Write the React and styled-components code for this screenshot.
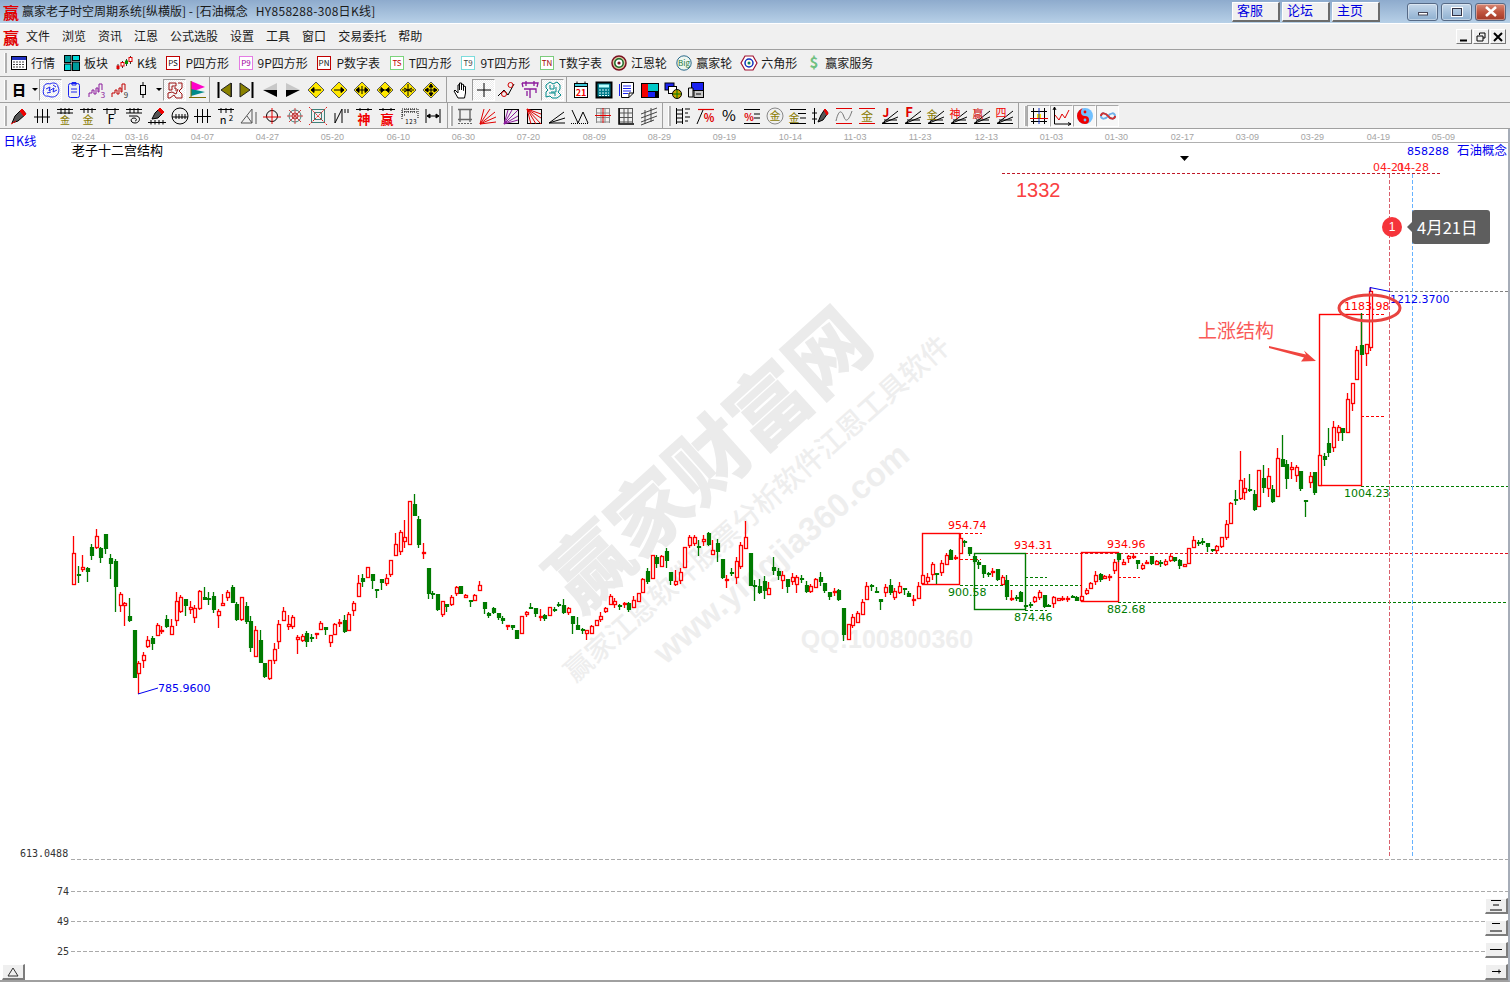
import React from "react"
import styled, { createGlobalStyle } from "styled-components"

const CJK = `"Noto Sans CJK SC", "Liberation Sans", sans-serif`
const RED = "#ff0000"
const GREEN = "#007b00"

const GlobalStyle = createGlobalStyle`
  html, body {
    margin: 0;
    background: #fff;
    font-family: ${CJK};
  }
`

const Page = styled.div`
  width: 1510px;
  height: 982px;
  display: flex;
  flex-direction: column;
  overflow: hidden;
  background: #f0f0f0;
  color: #111;
  font-size: 12px;
`

/* title bar */
const TitleBar = styled.header`
  height: 23px;
  flex: none;
  display: flex;
  align-items: center;
  padding-left: 3px;
  background: linear-gradient(#8eabcd, #b7d0e7);
  border-bottom: 1px solid #fff;
`
const Logo = styled.span`
  width: 16px;
  font-size: 16px;
  line-height: 16px;
  font-weight: 700;
  color: #e00000;
  flex: none;
`
const TitleText = styled.span`
  margin: -2px 0 0 3px;
  white-space: pre;
  color: #1a1a1a;
  flex: 1;
`
const TitleCode = styled.span`
  letter-spacing: 0.3px;
`
const LinkGroup = styled.div`
  display: flex;
  gap: 2px;
  margin-right: 27px;
`
const LinkButton = styled.button`
  width: 48px;
  height: 20px;
  padding: 0 0 3px 4px;
  text-align: left;
  font: 13px/1 ${CJK};
  color: #0000e0;
  background: #f0f0f0;
  border: 1px solid;
  border-color: #fff #6c6c6c #6c6c6c #fff;
  border-right-width: 2px;
  border-bottom-width: 2px;
`
const WinGroup = styled.div`
  display: flex;
  gap: 3px;
  margin-right: 4px;
`
const WinButton = styled.div`
  width: 31px;
  height: 18px;
  box-sizing: border-box;
  display: flex;
  align-items: center;
  justify-content: center;
  border: 1px solid #566a86;
  border-radius: 3px;
  box-shadow: inset 0 0 0 1px #ffffff66;
  background: ${(p) =>
    p.$close
      ? "linear-gradient(#d68a78 0%, #c0553f 50%, #a33a28 100%)"
      : "linear-gradient(#c6d8ea 0%, #a9c3dd 50%, #8fb0d0 100%)"};
`

/* menu */
const MenuBar = styled.nav`
  height: 25px;
  flex: none;
  display: flex;
  align-items: center;
  padding-left: 3px;
  border-bottom: 1px solid #a0a0a0;
`
const MenuItems = styled.div`
  display: flex;
  gap: 12px;
  margin: -2px 0 0 7px;
  flex: 1;
`
const MenuItem = styled.span`
  color: #1a1a1a;
`
const MdiGroup = styled.div`
  display: flex;
  gap: 1px;
  margin-right: 4px;
`
const MdiButton = styled.div`
  width: 16px;
  height: 15px;
  box-sizing: border-box;
  display: flex;
  align-items: center;
  justify-content: center;
  background: #f0f0f0;
  border: 1px solid;
  border-color: #fff #777 #777 #fff;
`

/* tool bars */
const ToolRow = styled.div`
  height: ${(p) => p.$h}px;
  flex: none;
  display: flex;
  align-items: center;
  padding-left: 3px;
  border-bottom: 1px solid #a0a0a0;
`
const Grip = styled.i`
  width: 1px;
  height: 20px;
  flex: none;
  background: #b0b0b0;
  border-left: 1px solid #fff;
  border-right: 1px solid #b0b0b0;
  margin-left: ${(p) => p.$left || 0}px;
  margin-right: ${(p) => p.$right ?? 1}px;
`
const Divider = styled.i`
  width: 1px;
  height: 25px;
  flex: none;
  background: #a0a0a0;
  margin-left: ${(p) => p.$left || 0}px;
  margin-right: ${(p) => p.$right || 0}px;
`
const TextTool = styled.div`
  display: flex;
  align-items: center;
  gap: ${(p) => p.$gap ?? 4}px;
  margin-left: ${(p) => p.$left ?? 9}px;
  white-space: nowrap;
`
const ToolLabel = styled.span`
  margin-top: -2px;
  color: #1a1a1a;
`
const ToolButton = styled.div`
  width: 23px;
  height: 22px;
  box-sizing: border-box;
  flex: none;
  display: flex;
  align-items: center;
  justify-content: center;
  ${(p) =>
    p.$pressed &&
    `
    background: repeating-conic-gradient(#fff 0 25%, #ececec 0 50%) 0 0 / 2px 2px;
    border: 1px solid;
    border-color: #9a9a9a #fff #fff #9a9a9a;
  `}
  ${(p) =>
    p.$framed &&
    `
    background: #f7f7f7;
    border: 1px solid;
    border-color: #a8a8a8 #fff #fff #a8a8a8;
  `}
`
const DropArrow = styled.div`
  width: 9px;
  height: 22px;
  flex: none;
  display: flex;
  align-items: center;
  justify-content: center;
  &::after {
    content: "";
    border: 3px solid transparent;
    border-top: 3px solid #000;
    border-bottom: 0;
  }
`
const GlyphSvg = styled.svg`
  display: block;
  flex: none;
  overflow: visible;
  font-family: ${CJK};
`

const Glyph = ({ size = 20, children }) => (
  <GlyphSvg width={size} height={size} viewBox="0 0 20 20" fill="none" stroke="#000" strokeWidth="1">
    {children}
  </GlyphSvg>
)

const Fanned = ({ children }) => (
  <>
    <path d="M2 17.5H18M2 17.5L18 11M2 17.5L18 5M4 14H17" />
    {children}
  </>
)

const Tx = ({ x = 10, y = 16, s = 14, c = "#000", w = 400, children }) => (
  <text x={x} y={y} fontSize={s} fill={c} stroke="none" fontWeight={w} textAnchor="middle">
    {children}
  </text>
)

const Diamond = ({ children }) => (
  <>
    <path d="M10 2L18 10L10 18L2 10Z" fill="#ffe800" stroke="#555" />
    <g stroke="#000" fill="#000">{children}</g>
  </>
)

const icons = {
  day: <Tx y={15} s={14} w={900}>日</Tx>,
  cloud: (
    <g stroke="#1a22f0">
      <path d="M3 8C2 4 7 3 9 4C12 2 17 3 17 7C19 10 17 14 16 15C13 18 9 17 7 16C3 17 1 13 3 8Z" />
      <path d="M5 9L9 7L8 11L13 8L12 12L16 10M6 13L10 12M12 5L15 7" />
    </g>
  ),
  clip: (
    <g stroke="#1a22f0">
      <rect x="4.5" y="3.5" width="11" height="14" rx="2" />
      <path d="M8 2.5H12V5H8ZM7 9H13M7 12H13" />
    </g>
  ),
  wave3: (
    <>
      <path d="M2 17V13H5V10H7V14H9V8H11V12H12V4H15V10" stroke="#8b1a9c" />
      <Tx x={16} y={18} s={8} c="#8b1a9c">3</Tx>
    </>
  ),
  wave9: (
    <>
      <path d="M2 17V13H5V10H7V14H9V8H11V12H12V4H15V10" stroke="#c00000" />
      <Tx x={16} y={18} s={8} c="#333">9</Tx>
    </>
  ),
  candle: (
    <>
      <path d="M10 2V5M10 15V18" />
      <rect x="7.5" y="5.5" width="5" height="9" />
    </>
  ),
  maze: (
    <path
      stroke="#9a1010"
      d="M4 3H11V6H7V10H4ZM13 3H17V8L14 11L17 14V18H11L9 15L5 18H3V13L7 12L11 14L13 9M9 8H11V11"
    />
  ),
  flag: (
    <>
      <path d="M3 1V12L17 7Z" fill="#ff00c8" stroke="none" />
      <path d="M3 9V16L17 12Z" fill="#008a8a" stroke="none" />
      <path d="M3 1V18M1 17.5H18" stroke="#7a6a00" />
    </>
  ),
  first: (
    <>
      <path d="M17 3V17L7 10Z" fill="#8a8200" stroke="#222" />
      <path d="M4.5 2V18" strokeWidth="2" />
      <path d="M17.5 3V17" stroke="#222" />
    </>
  ),
  last: (
    <>
      <path d="M3 3V17L13 10Z" fill="#8a8200" stroke="#222" />
      <path d="M15.5 2V18" strokeWidth="2" />
    </>
  ),
  prev: (
    <>
      <path d="M17 3V10H3Z" fill="#c8c8c8" stroke="none" />
      <path d="M17 17V10H3Z" fill="#000" stroke="none" />
    </>
  ),
  next: (
    <>
      <path d="M3 3V10H17Z" fill="#c8c8c8" stroke="none" />
      <path d="M3 17V10H17Z" fill="#000" stroke="none" />
    </>
  ),
  dLeft: (
    <Diamond>
      <path d="M5 10H15M5 10L8 7.5V12.5Z" />
    </Diamond>
  ),
  dRight: (
    <Diamond>
      <path d="M5 10H15M15 10L12 7.5V12.5Z" />
    </Diamond>
  ),
  dBoth: (
    <Diamond>
      <path d="M4 10H16M4 10L7 7.5V12.5ZM16 10L13 7.5V12.5ZM10 6V14" />
    </Diamond>
  ),
  dIn: (
    <Diamond>
      <path d="M4 10H16M9 10L6 7.5V12.5ZM11 10L14 7.5V12.5Z" />
    </Diamond>
  ),
  dCross: (
    <Diamond>
      <path d="M4 10H16M10 4V16M6 8L14 12M14 8L6 12" />
    </Diamond>
  ),
  dAll: (
    <Diamond>
      <path d="M4 10H16M10 4V16M10 4L8 7H12ZM10 16L8 13H12ZM4 10L7 8V12ZM16 10L13 8V12Z" />
    </Diamond>
  ),
  hand: (
    <path d="M7 18L3 11L4 10L7 13V5L8.5 4.5V10V3L10.5 3V10V4L12.5 4.5V10.5V6L14.5 6.5V13L13.5 18Z" fill="#fff" />
  ),
  cross: <path d="M10 3V17M3 10H17" />,
  zigzag: (
    <>
      <path d="M1 16L7 10L11 15L17 4" />
      <circle cx="7" cy="14" r="2.5" stroke="#d00000" />
      <circle cx="13.5" cy="5" r="2.5" stroke="#d00000" />
    </>
  ),
  jie: (
    <path
      stroke="#8b1a9c"
      strokeWidth="1.3"
      d="M2 3H18L17 7M2 3L3 7M6 1V6M14 1V6M4 9H16V13M10 9V18M7 11V16"
    />
  ),
  tealMaze: (
    <path
      stroke="#008a8a"
      d="M3 5L7 2L10 4L14 2L17 5V9L15 12L18 15L14 18H9L7 16L3 17V12L5 10L3 8ZM7 5V9H11V5M13 7V12H8M6 13H12V16"
    />
  ),
  cal: (
    <>
      <rect x="3.5" y="4.5" width="13" height="13" fill="#fff" />
      <rect x="3.5" y="3.5" width="13" height="3" fill="#3cc8d8" />
      <path d="M6 1.5V4M14 1.5V4" />
      <Tx y={16} s={9} c="#f00000" w={700}>21</Tx>
    </>
  ),
  calc: (
    <>
      <rect x="2.5" y="2.5" width="15" height="15" fill="#007a8a" stroke="#000" strokeWidth="2" />
      <rect x="5" y="4.5" width="10" height="3" fill="#bff" stroke="none" />
      <path d="M5 10H15M5 13H15M5 15.5H15" stroke="#dff" strokeDasharray="2 1" />
    </>
  ),
  note: (
    <>
      <path d="M4.5 2.5H16.5V13L12 17.5H4.5Z" fill="#fff" />
      <path d="M2.5 4V16M6 6H14M6 8.5H14M6 11H14M6 13.5H11" stroke="#1a22f0" />
      <path d="M12 17.5V13H16.5" />
    </>
  ),
  disk: (
    <>
      <rect x="1" y="3" width="18" height="15" fill="#000" stroke="none" />
      <rect x="2" y="4" width="6" height="13" fill="#f00000" stroke="none" />
      <rect x="8" y="4" width="10" height="7" fill="#00c8c8" stroke="none" />
      <rect x="8" y="12" width="7" height="5" fill="#1a22f0" stroke="none" />
    </>
  ),
  net: (
    <>
      <rect x="2" y="3" width="9" height="7" fill="#1a22f0" />
      <rect x="5.5" y="6.5" width="8" height="7" fill="#fff" />
      <circle cx="14" cy="14" r="4.5" fill="#c8a000" />
      <path d="M10 14H18M14 10V18" stroke="#007a00" />
    </>
  ),
  pc: (
    <>
      <rect x="5.5" y="2.5" width="12" height="8" fill="#1a22f0" />
      <rect x="8" y="10.5" width="9.5" height="7" fill="#c8c8c8" />
      <path d="M2.5 8H7V17H2.5Z" fill="#e8e8e8" />
      <path d="M10 14H15" />
    </>
  ),
  pencil: (
    <>
      <path d="M3 17L6 10L13 3L17 8L9 15Z" fill="#555" />
      <path d="M11 5L13 3L17 8L15 10Z" fill="#f00000" stroke="#f00000" />
      <path d="M2 18L7 15" stroke="#f00000" />
    </>
  ),
  bars: <path d="M5.5 3V17M10.5 3V17M15.5 3V17M2 11H18" />,
  gold1: (
    <>
      <path d="M2 3.5H18M2 7H18M6 2V8M14 2V8M10 2V8" />
      <Tx y={18} s={10} c="#8a7a00">金</Tx>
    </>
  ),
  gold2: (
    <>
      <path d="M2 3.5H18M6 2V7M14 2V7M10 2V7" />
      <Tx y={18} s={11} c="#8a7a00">金</Tx>
    </>
  ),
  fBar: (
    <>
      <path d="M2 3.5H18M6 2V8M14 2V8" />
      <Tx y={18} s={13}>F</Tx>
    </>
  ),
  spiral: <path d="M2 3.5H18M2 7H18M6 2V7M10 2V7M14 2V7M5 10H13C17 11 16 17 11 17C6 17 6 12 10 12C13 12 13 15 11 15" />,
  pencilRule: (
    <>
      <path d="M5 13L8 7L13 2L17 6L11 12Z" fill="#555" />
      <path d="M11 4L13 2L17 6L15 8Z" fill="#f00000" stroke="#f00000" />
      <path d="M1 16.5H19M4 14V18.5M8 14V18.5M12 14V18.5M16 14V18.5" />
    </>
  ),
  circleRule: (
    <>
      <circle cx="10" cy="10" r="8" />
      <path d="M2 11H18M6 8V13M9 8V13M12 8V13M15 8V13" />
    </>
  ),
  bars2: <path d="M4.5 3V17M9.5 3V17M14.5 3V17M1 10.5H18" />,
  n2: (
    <>
      <path d="M2 3.5H18M5 2V7M10 2V7M15 2V7" />
      <Tx x={7} y={18} s={11}>n</Tx>
      <Tx x={15} y={15} s={8}>2</Tx>
    </>
  ),
  tri: <path d="M2 17L13 3V17ZM8 10L13 17M17 6V18" stroke="#555" />,
  crosshair: (
    <>
      <circle cx="10" cy="10" r="5.5" stroke="#000" />
      <path d="M1 11H19M10 2V18" stroke="#e00000" />
    </>
  ),
  web: (
    <>
      <circle cx="10" cy="10" r="3" stroke="#b04040" />
      <circle cx="10" cy="10" r="6" stroke="#40807a" />
      <path d="M2 10H18M10 2V18M4 4L16 16M16 4L4 16" stroke="#d04040" />
    </>
  ),
  webSquare: (
    <>
      <rect x="3.5" y="3.5" width="13" height="13" stroke="#40807a" />
      <rect x="6.5" y="6.5" width="7" height="7" stroke="#40807a" />
      <path d="M1 1L19 19M19 1L1 19" stroke="#e02020" strokeDasharray="2 1" />
    </>
  ),
  nQuote: <path d="M4 17V7M4 17L11 3V17M14 3V7M17 3V7" />,
  shen: (
    <>
      <path d="M2 3.5H18M6 2V5M14 2V5" />
      <Tx y={18} s={13} c="#f00000" w={700}>神</Tx>
    </>
  ),
  ying: (
    <>
      <path d="M2 3.5H18M6 2V5M14 2V5" />
      <Tx y={18} s={13} c="#f00000" w={700}>赢</Tx>
    </>
  ),
  rule123: (
    <>
      <path d="M2 13V3H18V13M2 6H18M5 3V6M8 3V6M11 3V6M14 3V6M2 9H5" strokeDasharray="1 1" />
      <Tx x={7} y={18} s={6}>1</Tx>
      <Tx x={11} y={18} s={6}>2</Tx>
      <Tx x={15} y={18} s={6}>3</Tx>
    </>
  ),
  span: <path d="M3 3V17M17 3V17M4 10H16M4 10L7 8V12ZM16 10L13 8V12Z" fill="#000" />,
  boxRule: (
    <>
      <path d="M3 3.5H17M5 3.5V16M15 3.5V16M3 13.5H17" stroke="#666" strokeWidth="1.4" />
      <path d="M3 17.5H17" stroke="#666" strokeDasharray="2 1" />
    </>
  ),
  redFan: <path stroke="#e00000" d="M2 18L18 16M2 18L18 11M2 18L17 6M2 18L12 3M2 18L6 3" />,
  boxFan: (
    <>
      <rect x="3.5" y="3.5" width="14" height="14" stroke="#000" />
      <path stroke="#8b1a9c" d="M3 18L17 14M3 18L17 10M3 18L17 4M3 18L11 4M3 18L7 4" />
    </>
  ),
  boxFanRed: (
    <>
      <rect x="3.5" y="3.5" width="14" height="14" stroke="#000" />
      <path stroke="#e00000" d="M3 3L17 8M3 3L17 12M3 3L17 18M3 3L12 18M3 3L7 18" />
    </>
  ),
  lineFan: <path d="M2 17H18M2 17L18 12M2 17L17 6" />,
  vDots: (
    <>
      <path d="M2 4L8 17L13 6L18 17" />
      <path d="M1 17.5H19" strokeDasharray="1 1" />
    </>
  ),
  gridRed: (
    <>
      <path stroke="#888" d="M3 2.5H17M3 7H17M3 11.5H17M3 16H17M3.5 2V17M8 2V17M12 2V17M16.5 2V17" />
      <path stroke="#e00000" d="M2 9.5H18M10 2V17" />
    </>
  ),
  gridBlack: (
    <>
      <path stroke="#555" d="M3 2.5H17M3 7H17M3 11.5H17M3 16H17M3.5 2V17M8 2V17M12 2V17M16.5 2V17" />
      <path d="M3 2V18H18" strokeWidth="1.5" />
    </>
  ),
  stripes: <path stroke="#444" d="M2 8L18 2M2 12L18 6M2 16L18 10M2 19L15 14M6 4V18M12 2V16" />,
  ladder: <path d="M3.5 2V18M9.5 2V18M3 4H9M3 8H9M3 12H9M3 16H9M12 3H17M12 7H15M12 11H17M12 15H15" />,
  slashPct: (
    <>
      <path d="M2 3.5H18" stroke="#e00000" strokeWidth="1.2" />
      <path d="M1 18L7 4" />
      <Tx x={13} y={16} s={11} c="#e00000" w={700}>%</Tx>
    </>
  ),
  pct: <Tx y={15} s={15}>%</Tx>,
  pctLines: (
    <>
      <path d="M2 3.5H18M12 8H18M12 12H18M2 17.5H18" />
      <Tx x={7} y={15} s={10} c="#e00000" w={700}>%</Tx>
    </>
  ),
  goldCircle: (
    <>
      <circle cx="10" cy="10" r="8" stroke="#888" />
      <Tx y={14} s={11} c="#8a7a00">金</Tx>
    </>
  ),
  goldLines: (
    <>
      <path d="M2 3.5H18M10 7.5H18M12 12H18M2 17.5H18" />
      <Tx x={6} y={16} s={11} c="#8a7a00">金</Tx>
    </>
  ),
  candlePen: (
    <>
      <path d="M3.5 2V18M1 7H6M1 13H6" />
      <path d="M7 16L10 9L14 3L17 7L12 14Z" fill="#555" />
      <path d="M13 4L14 3L17 7L16 9Z" fill="#f00000" stroke="#f00000" />
    </>
  ),
  waveRed: (
    <>
      <path d="M2 2.5H18M2 17.5H18" stroke="#e00000" />
      <path d="M2 15C5 2 8 5 10 11C12 17 15 14 18 5" stroke="#777" />
    </>
  ),
  goldRed: (
    <>
      <path d="M2 2.5H18M2 17.5H18" stroke="#e00000" />
      <Tx y={15} s={12} c="#8a7a00">金</Tx>
    </>
  ),
  fanJ: (
    <Fanned>
      <Tx x={6} y={11} s={12} c="#e00000" w={700}>J</Tx>
    </Fanned>
  ),
  fanF: (
    <Fanned>
      <Tx x={6} y={11} s={13} c="#e00000" w={700}>F</Tx>
    </Fanned>
  ),
  fanGold: (
    <Fanned>
      <Tx x={6} y={13} s={11} c="#8a7a00">金</Tx>
    </Fanned>
  ),
  fanShen: (
    <Fanned>
      <Tx x={6} y={12} s={11} c="#f00000">神</Tx>
    </Fanned>
  ),
  fanYing: (
    <Fanned>
      <Tx x={6} y={12} s={11} c="#d00000">赢</Tx>
    </Fanned>
  ),
  fanFour: (
    <Fanned>
      <Tx x={6} y={11} s={11} c="#f00000">四</Tx>
    </Fanned>
  ),
  gridYellow: (
    <>
      <rect x="8" y="8" width="4" height="4" fill="#ffe800" stroke="none" />
      <path d="M2 5.5H18M2 15.5H18M4.5 2V18M15.5 2V18" />
      <path d="M1 12.5H19" stroke="#e00000" />
      <path d="M10 2V18" stroke="#1030c0" />
    </>
  ),
  chartArrow: (
    <>
      <path d="M2.5 1V18H19M2.5 1L1 4M2.5 1L4 4M19 18L16 16.5M19 18L16 19.5" />
      <path d="M3 9L7 14L10 8L13 12L17 4" stroke="#e00000" />
    </>
  ),
  yinyang: (
    <>
      <circle cx="10" cy="10" r="8" fill="#70c0ff" stroke="none" />
      <path d="M10 2A8 8 0 0 0 10 18A4 4 0 0 0 10 10A4 4 0 0 1 10 2Z" fill="#f00000" stroke="none" />
      <circle cx="10" cy="6" r="1.4" fill="#f00000" stroke="none" />
      <circle cx="10" cy="14" r="1.4" fill="#70c0ff" stroke="none" />
    </>
  ),
  infinity: (
    <>
      <path strokeWidth="2" stroke="#70b0e8" d="M10 10C8 7 3 6 3 10C3 14 8 13 10 10" />
      <path strokeWidth="2" stroke="#70b0e8" d="M10 10C12 7 17 6 17 10C17 14 12 13 10 10" />
      <path strokeWidth="2" stroke="#d03030" d="M3 10C3 6 8 7 10 10C12 13 17 14 17 10" />
    </>
  ),
}

const BoxLabel = ({ border, color, dashed, children }) => (
  <GlyphSvg width="14" height="14" viewBox="0 0 14 14">
    <rect
      x="0.5"
      y="0.5"
      width="13"
      height="13"
      fill="#fff"
      stroke={border}
      strokeDasharray={dashed ? "1 1" : undefined}
    />
    <text x="7" y="10" fontSize="8" textAnchor="middle" fill={color}>
      {children}
    </text>
  </GlyphSvg>
)

const topTools = [
  { label: "P四方形", box: "PS", border: "#c00000", color: "#111" },
  { label: "9P四方形", box: "P9", border: "#d000d0", color: "#a000a0", dashed: true },
  { label: "P数字表", box: "PN", border: "#c00000", color: "#111" },
  { label: "T四方形", box: "TS", border: "#00b000", color: "#c00000", dashed: true },
  { label: "9T四方形", box: "T9", border: "#00c0c0", color: "#444", dashed: true },
  { label: "T数字表", box: "TN", border: "#00a000", color: "#a00000", dashed: true },
]

const Tool = ({ name, pressed, framed }) => (
  <ToolButton $pressed={pressed} $framed={framed}>
    <Glyph>{icons[name]}</Glyph>
  </ToolButton>
)

const Tools = ({ names, framed }) =>
  names.map((name) => <Tool key={name} name={name} framed={framed} />)

/* [x, red?, wick top, body top, body bottom, wick bottom], read in 3x crop coordinates */
const segA = [
  [39,1,138,190,282,285],[54,0,228,252,254,278],[66,1,195,232,236,246],[81,0,232,234,245,276],[95,0,162,171,197,210],
  [108,1,117,139,170,176],[122,0,172,174,204,219],[137,0,132,132,176,192],[150,0,193,204,221,267],[165,0,208,213,290,366],
  [180,1,307,313,346,366],[192,1,335,340,346,408],[207,0,324,378,393,396],[222,0,420,420,564,564],[234,1,514,520,548,612],
  [249,1,486,496,509,534],[263,1,438,451,467,474],[276,0,438,444,461,480],[291,1,400,406,434,436],[305,1,407,420,423,432],
  [318,0,376,387,411,414],[333,1,388,409,431,436],[348,1,306,334,389,408],[360,1,315,320,362,370],[375,0,327,327,348,378],
  [390,1,333,351,356,372],[402,1,345,354,380,399],[417,1,300,304,353,360],[432,0,291,321,330,330],[444,0,306,323,326,345],
  [459,0,306,318,360,369],[474,1,357,363,374,414],[486,1,312,339,345,348],[501,1,300,306,320,333],[516,0,285,291,339,339],
  [528,0,336,342,390,393],[543,1,321,322,387,393],[558,0,336,348,396,402],[570,0,378,393,474,486],[585,1,408,420,497,498],
  [600,0,420,450,519,519],[612,0,519,519,561,564],[627,1,510,511,564,570],[642,1,459,478,510,522],[654,1,390,402,453,477],
  [669,1,351,363,390,393],[684,1,375,403,407,420],[696,1,376,381,408,418],[711,1,435,441,446,492],[726,1,432,438,451,456],
  [738,0,423,429,456,471],[753,0,432,441,444,456],[768,1,429,430,433,447],[780,1,393,399,417,420],[795,0,411,411,420,435],
  [810,1,435,435,456,471],[822,1,400,402,432,435],[837,1,387,396,399,411],[852,0,375,390,426,429],[864,1,366,372,420,420],
  [879,1,333,339,360,378],[894,1,255,279,318,321],[906,0,252,264,276,291],[921,1,231,232,261,261],[936,0,252,252,273,297],
  [948,0,297,298,301,324],[963,0,267,267,279,300],[978,1,252,264,279,288],[990,1,210,210,252,261],[1005,1,129,162,195,195],
  [1020,1,120,126,183,195],[1032,1,90,141,152,174],[1047,1,34,34,161,161],[1062,0,12,42,78,78],[1074,0,78,87,165,174],
  [1089,1,159,186,188,207],[1104,0,234,234,312,327],[1116,0,303,309,315,327],[1131,0,312,312,360,363],[1146,1,333,333,372,381],
  [1158,0,342,342,351,366],[1173,1,315,321,342,348],[1188,1,288,291,309,318],[1200,0,288,288,312,312],
]
const segB = [
  [75,1,313,316,320,324],[90,0,330,331,333,351],[102,1,311,315,330,333],[117,1,273,285,300,303],[132,0,337,337,357,372],
  [144,0,366,369,378,384],[159,0,351,354,369,372],[174,0,369,369,384,390],[186,0,378,384,394,402],[201,1,405,405,408,420],
  [216,0,405,405,414,420],[228,0,420,420,447,447],[243,1,378,378,429,429],[258,1,363,366,372,381],[270,0,339,351,354,354],
  [285,0,354,354,372,381],[300,1,357,378,381,393],[312,0,372,375,387,393],[327,1,351,351,375,375],[342,0,351,357,363,366],
  [354,0,336,342,345,351],[369,0,327,345,369,372],[384,1,351,354,366,375],[396,0,378,378,402,432],[411,0,381,405,420,421],
  [426,0,414,417,421,432],[438,1,420,421,429,450],[453,1,405,408,429,429],[468,1,390,390,405,408],[480,1,366,378,387,396],
  [495,1,351,354,363,369],[510,1,312,318,342,345],[522,1,324,333,342,354],[537,0,342,345,348,360],[552,1,336,339,343,354],
  [564,0,336,339,360,366],[579,1,318,330,351,351],[594,1,309,309,333,336],[606,1,264,267,306,309],[621,0,234,243,276,282],
  [636,1,196,196,264,264],[648,0,195,201,222,234],[663,1,195,198,228,231],[678,0,174,183,213,234],[690,0,246,246,273,285],
  [705,1,240,273,282,288],[720,1,234,246,270,282],[732,1,171,171,231,231],[747,1,135,141,165,174],[762,1,135,141,159,168],
  [774,0,150,168,171,198],[789,1,135,147,153,168],[804,0,126,129,165,168],[816,1,150,180,192,195],[831,0,147,159,186,216],
  [846,0,207,207,264,267],[858,1,255,267,270,294],[873,0,234,246,252,258],[888,1,201,213,261,282],[900,1,156,165,228,237],
  [915,1,93,141,174,174],[930,0,189,189,288,288],[942,0,270,285,291,333],[957,0,267,288,309,312],[972,0,258,273,303,327],
  [984,1,276,294,312,315],[999,0,201,231,243,255],[1014,0,234,243,258,270],[1026,1,243,255,270,297],[1041,0,267,267,291,309],
  [1056,1,249,262,273,285],[1068,1,255,261,282,309],[1083,0,255,264,267,279],[1098,0,273,285,306,309],[1110,1,282,288,303,309],
  [1125,1,264,267,291,294],[1140,0,246,261,276,288],[1152,0,279,279,303,309],[1167,0,306,306,321,330],[1182,1,294,303,306,318],
  [1194,0,297,300,330,333],[1209,0,354,354,435,453],[1224,1,402,402,447,447],[1236,1,372,381,405,414],[1251,1,363,369,396,399],
  [1266,1,327,336,372,375],[1278,1,276,288,327,327],[1293,0,282,285,288,303],[1308,0,291,303,306,306],[1320,0,327,327,336,360],
  [1335,1,282,291,306,321],[1350,0,267,285,309,315],[1362,1,294,303,321,330],[1377,1,276,288,306,312],[1392,0,294,294,298,315],
  [1404,0,303,309,321,321],[1419,1,315,327,329,348],[1434,1,276,288,324,327],
]
const segC = [
  [66,1,195,196,218,222],[81,1,190,202,212,222],[96,1,155,163,193,210],[108,0,188,190,192,222],[123,1,150,160,186,198],
  [138,1,130,135,163,165],[150,0,118,120,150,150],[165,1,135,140,142,150],[180,1,70,85,130,133],[192,0,90,93,96,110],
  [207,0,110,112,133,138],[222,0,138,138,156,162],[234,0,150,156,166,177],[249,0,165,165,192,204],[264,0,185,188,195,201],
  [276,1,173,183,186,202],[291,0,177,177,210,213],[306,1,195,201,222,225],[318,0,195,210,260,270],[333,1,240,264,267,273],
  [348,0,255,262,265,273],[360,0,243,246,276,276],[375,0,285,285,288,296],[390,0,276,282,285,294],[402,1,258,262,273,279],
  [417,1,240,245,262,270],[432,0,255,255,291,294],[444,0,282,285,288,291],[459,1,258,262,278,294],[474,1,263,265,269,273],
  [486,1,258,264,268,274],[501,1,258,265,268,275],[516,0,255,258,261,264],[528,0,258,261,273,273],[543,1,258,259,270,271],
  [558,1,235,240,250,255],[570,1,215,220,233,237],[585,1,182,196,212,225],[600,0,190,193,210,216],[612,1,195,199,203,207],
  [627,1,192,197,201,213],[642,1,148,155,179,192],[654,0,130,130,150,157],[669,1,148,155,162,166],[684,1,135,138,145,160],
  [699,1,130,138,142,147],[711,0,150,150,162,177],[726,1,160,165,174,180],[738,1,150,155,159,163],[753,0,138,138,162,165],
  [768,1,150,153,161,165],[780,0,150,157,159,172],[795,1,148,154,161,168],[810,1,132,138,150,156],[822,0,140,142,153,156],
  [837,0,148,150,168,177],[852,1,162,163,167,167],[864,1,114,114,159,159],[879,1,78,90,110,114],[894,0,90,96,102,108],
  [906,0,84,93,99,105],[921,0,99,99,112,126],[936,0,117,117,123,126],[948,1,105,108,120,130],[963,1,80,82,108,114],
  [978,1,30,42,80,90],
]
const segD = [
  [150,1,695,700,758,762],[165,0,660,688,690,705],[180,1,543,631,683,690],[192,1,625,653,667,690],[207,0,612,656,660,666],
  [222,0,660,672,720,723],[234,1,601,601,707,707],[249,0,585,625,653,670],[264,1,594,619,653,681],[276,0,645,657,695,699],
  [291,1,535,565,677,677],[306,0,495,567,590,592],[318,0,570,581,627,657],[333,1,576,590,598,627],[348,1,585,592,616,637],
  [360,0,603,603,657,663],[375,0,690,690,694,741],[390,1,606,619,637,654],[402,0,606,606,669,675],[417,1,555,556,646,646],
  [432,0,548,558,570,588],[444,0,474,519,549,561],[459,1,452,472,530,546],[474,1,465,472,487,514],[486,0,475,474,488,513],
  [501,1,369,388,485,485],[516,1,340,340,400,423],[528,1,229,241,328,328],[543,0,130,225,255,255],[558,1,223,223,250,288],
  [570,1,50,64,232,243],
]

const place = (ox, oy, rows) =>
  rows.map(([zx, red, wt, bt, bb, wb]) => ({
    x: Math.floor(ox + zx / 3),
    red,
    wt: Math.round(oy + wt / 3),
    bt: Math.round(oy + bt / 3),
    bb: Math.round(oy + bb / 3),
    wb: Math.round(oy + wb / 3),
  }))

const candles = [
  ...place(60, 490, segA),
  ...place(440, 490, segB),
  ...place(900, 510, segC),
  ...place(1180, 270, segD),
]

const dates = [
  [71.7, "02-24"], [125, "03-16"], [190.7, "04-07"], [255.7, "04-27"], [320.7, "05-20"], [386.7, "06-10"],
  [451.7, "06-30"], [516.7, "07-20"], [582.7, "08-09"], [647.7, "08-29"], [712.7, "09-19"], [778.7, "10-14"],
  [843.7, "11-03"], [908.7, "11-23"], [974.7, "12-13"], [1039.7, "01-03"], [1104.7, "01-30"], [1170.7, "02-17"],
  [1235.7, "03-09"], [1300.7, "03-29"], [1366.7, "04-19"], [1431.7, "05-09"],
]

const boxes = [
  [922.5, 533.5, 37, 51, RED],
  [974.5, 553.5, 51, 56, GREEN],
  [1081.5, 552.5, 37, 49, RED],
  [1319.5, 314.5, 42, 171, RED],
]

/* [x1, x2, y, colour] */
const levels = [
  [960, 982, 533.5, RED],
  [960, 981, 559.5, RED],
  [960, 1081, 585.5, GREEN],
  [1025, 1508, 553.5, "#e01020"],
  [1025, 1047, 577.5, GREEN],
  [1025, 1047, 610.5, GREEN],
  [1118, 1140, 577.5, RED],
  [1118, 1508, 602.5, GREEN],
  [1361, 1384, 314.5, RED],
  [1361, 1384, 416.5, RED],
  [1361, 1508, 486.5, GREEN],
  [1390, 1508, 291.5, "#808080"],
  [1002, 1441, 173.5, "#c01828"],
]

const values = [
  [948, 529, "954.74", RED],
  [1014, 549, "934.31", RED],
  [948, 596, "900.58", GREEN],
  [1014, 621, "874.46", GREEN],
  [1107, 548, "934.96", RED],
  [1107, 613, "882.68", GREEN],
  [1344, 310, "1183.98", RED],
  [1344, 497, "1004.23", GREEN],
  [158, 692, "785.9600", "#0000f0"],
  [1390, 303, "1212.3700", "#0000f0"],
]

const scale = [
  [859.5, 857, "613.0488", 20],
  [891.5, 895, "74", 57],
  [921.5, 925, "49", 57],
  [951.5, 955, "25", 57],
]

/* chart */
const ChartArea = styled.main`
  position: relative;
  flex: 1;
  background: #fff;
  border-right: 2px solid #a6adb8;
  border-bottom: 2px solid #a0a0a0;
  overflow: hidden;
`
const ChartSvg = styled.svg`
  display: block;
`
const Value = styled.text`
  font: 11px "DejaVu Sans", sans-serif;
  fill: ${(p) => p.$c};
`
const DateText = styled.text`
  font: 9px "Liberation Sans", sans-serif;
  letter-spacing: 0.1px;
  fill: #a4a4a4;
`
const ScaleText = styled.text`
  font: 10px "DejaVu Sans Mono", monospace;
  fill: #333;
`
const ChartTitle = styled.text`
  font: ${(p) => p.$s || 13}px ${CJK};
  fill: ${(p) => p.$c || "#000"};
`
const Watermark = styled.text`
  font-family: ${(p) => p.$latin ? `"Liberation Sans", sans-serif` : CJK};
  font-weight: ${(p) => p.$w || 700};
  font-size: ${(p) => p.$s}px;
  fill: ${(p) => p.$c || "#ebebeb"};
  stroke: ${(p) => p.$c || "#ebebeb"};
  stroke-width: ${(p) => p.$bold || 0}px;
  text-anchor: middle;
  dominant-baseline: central;
`
const MarkerBadge = styled.div`
  position: absolute;
  left: 1382px;
  top: 88px;
  width: 20px;
  height: 20px;
  border-radius: 50%;
  background: #f5343a;
  color: #fff;
  font: 12px/20px "Liberation Sans", sans-serif;
  text-align: center;
`
const Tooltip = styled.div`
  position: absolute;
  left: 1412px;
  top: 81px;
  width: 78px;
  height: 34px;
  box-sizing: border-box;
  padding-left: 5px;
  border-radius: 3px;
  background: #5e5e5e;
  color: #fff;
  font: 16.5px/34px ${CJK};
  &::before {
    content: "";
    position: absolute;
    left: -5px;
    top: 12px;
    border: 5px solid transparent;
    border-left: 0;
    border-right-color: #5e5e5e;
  }
`
const SideButtons = styled.div`
  position: absolute;
  right: 0;
  bottom: 0;
  display: flex;
  flex-direction: column;
  gap: 6px;
`
const BevelButton = styled.div`
  width: 23px;
  height: 16px;
  box-sizing: border-box;
  display: flex;
  align-items: center;
  justify-content: center;
  background: #efefef;
  border: 1px solid;
  border-color: #fff #7c7c7c #7c7c7c #fff;
  border-right-width: 2px;
  border-bottom-width: 2px;
`
const CornerButton = styled(BevelButton)`
  position: absolute;
  left: 2px;
  bottom: 0;
`

const Candle = ({ x, red, wt, bt, bb, wb }) => {
  const color = red ? RED : GREEN
  const h = Math.max(bb - bt, 1)
  return (
    <g>
      <rect x={x - 0.15} y={wt} width="1.3" height={Math.max(wb - wt, 1)} fill={color} />
      {red ? (
        <rect x={x - 0.5} y={bt + 0.5} width="3" height={h} fill="#fff" stroke={color} strokeWidth="1.3" />
      ) : (
        <rect x={x - 1.1} y={bt} width="4.2" height={Math.max(h, 2)} fill={color} />
      )}
    </g>
  )
}

const Chart = () => (
  <ChartSvg width="1508" height="851" viewBox="0 129 1508 851" fill="none">
    <g transform="rotate(-42 705 455)">
      <Watermark x="705" y="455" $s={80} $bold={1.5}>赢家财富网</Watermark>
    </g>
    <g transform="rotate(-41.6 755.5 507)">
      <Watermark x="755.5" y="507" $s={28} $w={500} $c="#eeeeee">赢家江恩软件股票分析软件江恩工具软件</Watermark>
    </g>
    <g transform="rotate(-40 781 553)">
      <Watermark x="781" y="553" $s={33} $c="#eeeeee" $latin>www.yingjia360.com</Watermark>
    </g>
    <Watermark x="887" y="639" $s={25} $c="#eeeeee" $latin>QQ:100800360</Watermark>

    <ChartTitle x="3.5" y="146" $s={12.5} $c="#0000f0">日K线</ChartTitle>
    <path d="M71 142.5H1508" stroke="#b0b0b0" />
    {dates.map(([x, t]) => (
      <DateText key={t} x={x} y={139.5}>{t}</DateText>
    ))}
    <ChartTitle x="72" y="155" $s={13}>老子十二宫结构</ChartTitle>
    <Value x="1407" y="155" $c="#0000f0">858288</Value>
    <ChartTitle x="1457" y="155" $s={12.5} $c="#0000f0">石油概念</ChartTitle>
    <path d="M1180 156H1189L1184.5 161Z" fill="#000" />
    <Value x="1373" y="171" $c="#ff2020">04-21</Value>
    <Value x="1397" y="171" $c="#ff2020">04-28</Value>
    <ChartTitle x="1016" y="197" $s={20} $c="#f94040" style={{ fontFamily: "Liberation Sans" }}>1332</ChartTitle>

    <g shapeRendering="crispEdges">
      {levels.map(([a, b, y, c]) => (
        <path key={`${a}-${y}`} d={`M${a} ${y}H${b}`} stroke={c} strokeDasharray="3 2" />
      ))}
      <path d="M1389.5 174V857" stroke="#d8606c" strokeDasharray="4 2" />
      <path d="M1412.5 174V857" stroke="#66b2ff" strokeDasharray="4 2" />
      {scale.map(([y]) => (
        <path key={y} d={`M71 ${y}H1508`} stroke="#aaaaaa" strokeDasharray="4 2" />
      ))}
    </g>
    {boxes.map(([x, y, w, h, c]) => (
      <rect key={x} x={x} y={y} width={w} height={h} stroke={c} strokeWidth="1.4" />
    ))}
    {candles.map((c) => (
      <Candle key={`${c.x}-${c.wt}`} {...c} />
    ))}

    <path d="M138 694L158 688" stroke="#0000f0" />
    <path d="M1370 292V287.5L1390 291.5" stroke="#0000f0" />

    {values.map(([x, y, t, c]) => (
      <Value key={t} x={x} y={y} $c={c}>{t}</Value>
    ))}
    {scale.map(([y, base, t, x]) => (
      <ScaleText key={t} x={x} y={base}>{t}</ScaleText>
    ))}

    <ellipse cx="1369.5" cy="308" rx="30.5" ry="13" stroke="#e8433f" strokeWidth="3" />
    <ChartTitle x="1198" y="338" $s={19} $c="#f95a58">上涨结构</ChartTitle>
    <path d="M1269 346L1306 354.5L1304 350.5L1316 361L1301 361.5L1304 357.5L1269 348Z" fill="#f0453f" />
  </ChartSvg>
)

const lineSet = (d) => (
  <GlyphSvg width="18" height="13" viewBox="0 0 18 13">
    <path d={d} stroke="#000" strokeWidth="1" />
  </GlyphSvg>
)

export default function App() {
  return (
    <Page>
      <GlobalStyle />
      <TitleBar>
        <Logo>赢</Logo>
        <TitleText>
          赢家老子时空周期系统[纵横版] - [石油概念   <TitleCode>HY858288-308日K线]</TitleCode>
        </TitleText>
        <LinkGroup>
          <LinkButton>客服</LinkButton>
          <LinkButton>论坛</LinkButton>
          <LinkButton>主页</LinkButton>
        </LinkGroup>
        <WinGroup>
          <WinButton>
            <GlyphSvg width="12" height="10" viewBox="0 0 12 10">
              <rect x="1.5" y="5.5" width="9" height="2.5" fill="#fff" stroke="#445" />
            </GlyphSvg>
          </WinButton>
          <WinButton>
            <GlyphSvg width="12" height="10" viewBox="0 0 12 10">
              <rect x="1.5" y="1.5" width="9" height="7" fill="none" stroke="#334" strokeWidth="1" />
              <rect x="0.5" y="0.5" width="11" height="9" fill="none" stroke="#fff" strokeWidth="1" />
            </GlyphSvg>
          </WinButton>
          <WinButton $close>
            <GlyphSvg width="14" height="11" viewBox="0 0 14 11">
              <path d="M2 1L12 10M12 1L2 10" stroke="#fff" strokeWidth="2.6" />
            </GlyphSvg>
          </WinButton>
        </WinGroup>
      </TitleBar>

      <MenuBar>
        <Logo>赢</Logo>
        <MenuItems>
          {["文件", "浏览", "资讯", "江恩", "公式选股", "设置", "工具", "窗口", "交易委托", "帮助"].map((m) => (
            <MenuItem key={m}>{m}</MenuItem>
          ))}
        </MenuItems>
        <MdiGroup>
          <MdiButton>
            <GlyphSvg width="10" height="10" viewBox="0 0 10 10"><path d="M1 8.5H8" stroke="#000" strokeWidth="2" /></GlyphSvg>
          </MdiButton>
          <MdiButton>
            <GlyphSvg width="10" height="10" viewBox="0 0 10 10">
              <path d="M3.5 3V1H9V6H7M1 4H7V9H1Z" fill="none" stroke="#000" />
            </GlyphSvg>
          </MdiButton>
          <MdiButton>
            <GlyphSvg width="10" height="10" viewBox="0 0 10 10"><path d="M1 1L9 9M9 1L1 9" stroke="#000" strokeWidth="2" /></GlyphSvg>
          </MdiButton>
        </MdiGroup>
      </MenuBar>

      <ToolRow $h={26}>
        <Grip $left={1} $right={3} />
        <TextTool $left={1}>
          <GlyphSvg width="16" height="16" viewBox="0 0 16 16">
            <rect x="0.5" y="1.5" width="15" height="13" fill="#fff" stroke="#000" />
            <rect x="1" y="2" width="14" height="3" fill="#2030c0" />
            <path d="M2 7H14M2 9.5H14M2 12H14" stroke="#444" strokeDasharray="2 1" />
          </GlyphSvg>
          <ToolLabel>行情</ToolLabel>
        </TextTool>
        <TextTool>
          <GlyphSvg width="16" height="16" viewBox="0 0 16 16">
            <rect x="0.5" y="0.5" width="6.5" height="7" fill="#009a9a" stroke="#000" />
            <rect x="8.5" y="0.5" width="7" height="5" fill="#00d8d8" stroke="#000" />
            <rect x="0.5" y="9" width="6.5" height="6.5" fill="#00d8d8" stroke="#000" />
            <rect x="8.5" y="7" width="7" height="8.5" fill="#009a9a" stroke="#000" />
          </GlyphSvg>
          <ToolLabel>板块</ToolLabel>
        </TextTool>
        <TextTool $gap={5} $left={8}>
          <GlyphSvg width="16" height="16" viewBox="0 0 16 16">
            <path d="M2 9V15M6.5 6V13M10.5 4V11M14.5 1V9" stroke="#333" />
            <rect x="0.5" y="10.5" width="3" height="3.5" fill="#e00000" />
            <rect x="5" y="7.5" width="3" height="3.5" fill="#fff" stroke="#e00000" />
            <rect x="9" y="5.5" width="3" height="3.5" fill="#009000" />
            <rect x="13" y="2.5" width="3" height="4" fill="#fff" stroke="#e00000" />
          </GlyphSvg>
          <ToolLabel>K线</ToolLabel>
        </TextTool>
        {topTools.map((t) => (
          <TextTool key={t.label} $gap={5} $left={9.6}>
            <BoxLabel border={t.border} color={t.color} dashed={t.dashed}>{t.box}</BoxLabel>
            <ToolLabel>{t.label}</ToolLabel>
          </TextTool>
        ))}
        <TextTool $left={9}>
          <GlyphSvg width="16" height="16" viewBox="0 0 16 16">
            <circle cx="8" cy="8" r="7" fill="#d8c8a0" stroke="#7a1020" strokeWidth="1.5" />
            <circle cx="8" cy="8" r="4.2" fill="#fff" stroke="#1a6a2a" strokeWidth="1.5" />
            <circle cx="8" cy="8" r="1.6" fill="#7a1020" />
          </GlyphSvg>
          <ToolLabel>江恩轮</ToolLabel>
        </TextTool>
        <TextTool $left={9}>
          <GlyphSvg width="16" height="16" viewBox="0 0 16 16">
            <circle cx="8" cy="8" r="7.2" fill="#eef6f0" stroke="#2a6a8a" />
            <text x="8" y="11" fontSize="8" textAnchor="middle" fill="#1a7a3a">Big</text>
          </GlyphSvg>
          <ToolLabel>赢家轮</ToolLabel>
        </TextTool>
        <TextTool $left={9}>
          <GlyphSvg width="16" height="16" viewBox="0 0 16 16">
            <path d="M4 1H12L16 8L12 15H4L0 8Z" fill="#fff" stroke="#a01030" strokeWidth="1.2" />
            <circle cx="8" cy="8" r="4" fill="#ffe" stroke="#1030c0" strokeWidth="1.5" />
            <circle cx="8" cy="8" r="1.5" fill="#108060" />
          </GlyphSvg>
          <ToolLabel>六角形</ToolLabel>
        </TextTool>
        <TextTool $gap={5} $left={11}>
          <GlyphSvg width="12" height="16" viewBox="0 0 12 16">
            <text x="6" y="13" fontSize="15" fontWeight="700" textAnchor="middle" fill="#6fc080">$</text>
          </GlyphSvg>
          <ToolLabel>赢家服务</ToolLabel>
        </TextTool>
      </ToolRow>

      <ToolRow $h={25}>
        <Grip $left={1} $right={0} />
        <Tool name="day" />
        <DropArrow />
        <Tool name="cloud" pressed />
        <Tools names={["clip", "wave3", "wave9", "candle"]} />
        <DropArrow />
        <Tool name="maze" pressed />
        <Tool name="flag" />
        <Divider $right={2} />
        <Tools names={["first", "last", "prev", "next", "dLeft", "dRight", "dBoth", "dIn", "dCross", "dAll"]} />
        <Divider $left={4} $right={2} />
        <Tool name="hand" />
        <Tool name="cross" pressed />
        <Tools names={["zigzag", "jie"]} />
        <Tool name="tealMaze" pressed />
        <Divider $left={2} $right={2} />
        <Tools names={["cal", "calc", "note", "disk", "net", "pc"]} />
      </ToolRow>

      <ToolRow $h={25}>
        <Grip $left={1} $right={0} />
        <Tools
          names={[
            "pencil", "bars", "gold1", "gold2", "fBar", "spiral", "pencilRule", "circleRule", "bars2", "n2",
            "tri", "crosshair", "web", "webSquare", "nQuote", "shen", "ying", "rule123", "span",
          ]}
        />
        <Divider $left={3} $right={2} />
        <Grip $left={0} $right={0} />
        <Tools
          names={["boxRule", "redFan", "boxFan", "boxFanRed", "lineFan", "vDots", "gridRed", "gridBlack", "stripes"]}
        />
        <Divider $left={2} $right={5} />
        <Grip $left={0} $right={0} />
        <Tools
          names={[
            "ladder", "slashPct", "pct", "pctLines", "goldCircle", "goldLines", "candlePen", "waveRed", "goldRed",
            "fanJ", "fanF", "fanGold", "fanShen", "fanYing", "fanFour",
          ]}
        />
        <Divider $left={2} $right={5} />
        <Grip $left={0} $right={0} />
        <Tools framed names={["gridYellow", "chartArrow", "yinyang", "infinity"]} />
      </ToolRow>

      <ChartArea>
        <Chart />
        <MarkerBadge>1</MarkerBadge>
        <Tooltip>4月21日</Tooltip>
        <SideButtons>
          <BevelButton>{lineSet("M4 1.5H14M6 6H12M3 11H15")}</BevelButton>
          <BevelButton>{lineSet("M5 2.5H13M3 10H15")}</BevelButton>
          <BevelButton>{lineSet("M3 6.5H15")}</BevelButton>
          <BevelButton>{lineSet("M5 6.5H14M12 4.5V8.5")}</BevelButton>
        </SideButtons>
        <CornerButton>
          <GlyphSvg width="12" height="10" viewBox="0 0 12 10">
            <path d="M6 1L11 9H1Z" fill="none" stroke="#333" />
          </GlyphSvg>
        </CornerButton>
      </ChartArea>
    </Page>
  )
}
